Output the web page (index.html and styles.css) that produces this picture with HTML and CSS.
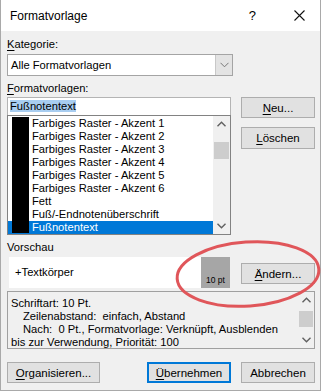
FILE: index.html
```html
<!DOCTYPE html>
<html lang="de">
<head>
    <meta charset="UTF-8">
    <title>Formatvorlage</title>
    <link rel="stylesheet" href="styles.css">
</head>
<body>
    <div class="window">
        <div class="titlebar">
            <span class="title">Formatvorlage</span>
            <span class="help">?</span>
            <svg class="close" width="11" height="11" viewBox="0 0 11 11"><path d="M0.5 0.5L10.5 10.5M10.5 0.5L0.5 10.5" stroke="#111" stroke-width="1.1"/></svg>
        </div>

        <div class="content">
            <div class="label"><u>K</u>ategorie:</div>
            <div class="select">
                <span>Alle Formatvorlagen</span>
                <span class="select-arrow">
                    <svg width="9" height="6" viewBox="0 0 9 6"><path d="M0.5 0.8L4.5 4.8L8.5 0.8" fill="none" stroke="#777" stroke-width="1"/></svg>
                </span>
            </div>

            <div class="label"><u>F</u>ormatvorlagen:</div>
            <div class="styles-row">
                <div class="styles-left">
                    <div class="textbox"><span class="sel-text">Fußnotentext</span></div>
                    <div class="listbox">
                        <div class="list-items">
                            <div class="item">Farbiges Raster - Akzent 1</div>
                            <div class="item">Farbiges Raster - Akzent 2</div>
                            <div class="item">Farbiges Raster - Akzent 3</div>
                            <div class="item">Farbiges Raster - Akzent 4</div>
                            <div class="item">Farbiges Raster - Akzent 5</div>
                            <div class="item">Farbiges Raster - Akzent 6</div>
                            <div class="item">Fett</div>
                            <div class="item">Fuß/-Endnotenüberschrift</div>
                            <div class="item selected">Fußnotentext</div>
                        </div>
                        <div class="black-bar"></div>
                        <div class="scrollbar">
                            <svg class="arrow" width="9" height="6" viewBox="0 0 9 6"><path d="M0.5 5.2L4.5 1.2L8.5 5.2" fill="none" stroke="#606060" stroke-width="1.4"/></svg>
                            <div class="track"><div class="thumb thumb-list"></div></div>
                            <svg class="arrow" width="9" height="6" viewBox="0 0 9 6"><path d="M0.5 0.8L4.5 4.8L8.5 0.8" fill="none" stroke="#606060" stroke-width="1.4"/></svg>
                        </div>
                    </div>
                </div>
                <div class="styles-right">
                    <button class="btn"><u>N</u>eu...</button>
                    <button class="btn btn-loeschen"><u>L</u>öschen</button>
                </div>
            </div>

            <div class="label label-preview">Vorschau</div>
            <div class="preview-row">
                <div class="preview">
                    <span class="preview-text">+Textkörper</span>
                    <span class="preview-size">10 pt</span>
                </div>
                <button class="btn btn-aendern"><u>Ä</u>ndern...</button>
            </div>

            <div class="description">
                <div class="desc-text">
                    <div>Schriftart: 10 Pt.</div>
                    <div class="indent">Zeilenabstand:&nbsp; einfach, Abstand</div>
                    <div class="indent">Nach:&nbsp; 0 Pt., Formatvorlage: Verknüpft, Ausblenden</div>
                    <div>bis zur Verwendung, Priorität: 100</div>
                </div>
                <div class="scrollbar scrollbar-desc">
                    <svg class="arrow" width="9" height="6" viewBox="0 0 9 6"><path d="M0.5 5.2L4.5 1.2L8.5 5.2" fill="none" stroke="#606060" stroke-width="1.4"/></svg>
                    <div class="track"><div class="thumb thumb-desc"></div></div>
                    <svg class="arrow" width="9" height="6" viewBox="0 0 9 6"><path d="M0.5 0.8L4.5 4.8L8.5 0.8" fill="none" stroke="#606060" stroke-width="1.4"/></svg>
                </div>
            </div>

            <div class="footer">
                <button class="btn btn-org"><u>O</u>rganisieren...</button>
                <div class="footer-right">
                    <button class="btn btn-default"><u>Ü</u>bernehmen</button>
                    <button class="btn">Abbrechen</button>
                </div>
            </div>
        </div>

        <!-- red marker drawn over the screenshot -->
        <svg class="marker" width="151" height="74" viewBox="0 0 151 74">
            <ellipse cx="75" cy="36" rx="71" ry="32" fill="none" stroke="#e0565a" stroke-width="3" transform="rotate(-4 75 36)"/>
        </svg>
    </div>
</body>
</html>
```

FILE: styles.css
```css
/* Dialog frame */
body {
    margin: 0;
    background: #fff;
    font-family: "Liberation Sans", Arial, sans-serif;
    font-size: 11.2px;
    color: #000;
}
.window {
    position: relative;
    width: 319px;
    height: 390px;
    border: 1px solid #a9a9a9;
    border-top: none;
    background: #f0f0f0;
}
.titlebar {
    height: 31px;
    background: #fff;
    display: flex;
    align-items: center;
}
.title {
    margin-left: 9px;
    flex: 1;
    font-size: 12px;
}
.help {
    font-size: 13px;
    margin-right: 38px;
}
.close {
    margin-right: 15px;
}

.content {
    padding: 6px 5px 0 6px;
}
.label {
    height: 15px;
    line-height: 15px;
}
u {
    text-decoration-thickness: 1px;
    text-underline-offset: 2px;
}

/* Kategorie dropdown */
.select {
    margin-top: 2px;
    width: 221px;
    height: 20px;
    border: 1px solid #a4a4a4;
    background: #fff;
    display: flex;
    align-items: center;
    padding-left: 3px;
    margin-bottom: 5px;
}
.select span:first-child {
    flex: 1;
}
.select-arrow {
    width: 16px;
    height: 20px;
    background: #e3e3e3;
    border-left: 1px solid #c8c8c8;
    display: flex;
    align-items: center;
    justify-content: center;
}

/* Formatvorlagen */
.styles-row {
    margin-top: 1px;
    display: flex;
    gap: 10px;
}
.styles-left {
    width: 225px;
}
.textbox {
    height: 18px;
    box-sizing: border-box;
    border: 1px solid #b4b4b4;
    border-bottom: none;
    background: #fff;
    padding-left: 2px;
    line-height: 17px;
}
.sel-text {
    background: #a8cdf0;
}
.listbox {
    position: relative;
    height: 120px;
    box-sizing: border-box;
    border: 1px solid #828282;
    background: #fff;
    display: flex;
}
.list-items {
    flex: 1;
    padding-top: 1px;
}
.item {
    height: 13px;
    line-height: 13px;
    padding-left: 24px;
    white-space: nowrap;
}
.item.selected {
    background: #0078d7;
    color: #fff;
}
.black-bar {
    position: absolute;
    left: 4px;
    top: 1px;
    bottom: 1px;
    width: 17px;
    background: #000;
}
.scrollbar {
    width: 17px;
    background: #f0f0f0;
    display: flex;
    flex-direction: column;
    align-items: center;
}
.scrollbar .arrow {
    margin: 5px 0;
}
.track {
    flex: 1;
    width: 100%;
}
.thumb {
    margin: 0 1px;
    background: #cdcdcd;
}
.thumb-list {
    margin-top: 10px;
    height: 17px;
}
.styles-right {
    display: flex;
    flex-direction: column;
}
.btn {
    width: 74px;
    height: 21px;
    padding: 0;
    background: #e1e1e1;
    border: 1px solid #adadad;
    font-family: inherit;
    font-size: 11.5px;
    color: #000;
}
.btn-loeschen {
    margin-top: 9px;
    height: 22px;
}

/* Vorschau */
.label-preview {
    margin-top: 5px;
}
.preview-row {
    margin-top: 2px;
    display: flex;
    align-items: center;
    gap: 11px;
}
.preview {
    margin-left: 2px;
    width: 221px;
    height: 31px;
    background: #fff;
    display: flex;
}
.preview-text {
    flex: 1;
    padding-left: 6px;
    line-height: 31px;
}
.preview-size {
    width: 29px;
    background: #a6a6a6;
    font-size: 8.5px;
    display: flex;
    align-items: flex-end;
    justify-content: center;
    padding-bottom: 3px;
    box-sizing: border-box;
}
.btn-aendern {
    margin-top: 2px;
}

/* Beschreibung */
.description {
    margin-top: 3px;
    width: 308px;
    height: 58px;
    box-sizing: border-box;
    border: 1px solid #a0a0a0;
    display: flex;
}
.desc-text {
    flex: 1;
    padding: 5px 0 0 3px;
    line-height: 13px;
    white-space: nowrap;
}
.indent {
    padding-left: 12px;
}
.scrollbar-desc {
    width: 16px;
}
.thumb-desc {
    margin-top: 3px;
    height: 16px;
}

/* Buttons unten */
.footer {
    margin-top: 13px;
    width: 308px;
    display: flex;
    justify-content: space-between;
}
.btn-org {
    width: 93px;
}
.footer-right {
    display: flex;
    gap: 10px;
}
.btn-default {
    width: 84px;
    border: 2px solid #0078d7;
}

/* red marker */
.marker {
    position: absolute;
    left: 172px;
    top: 238px;
}
```
